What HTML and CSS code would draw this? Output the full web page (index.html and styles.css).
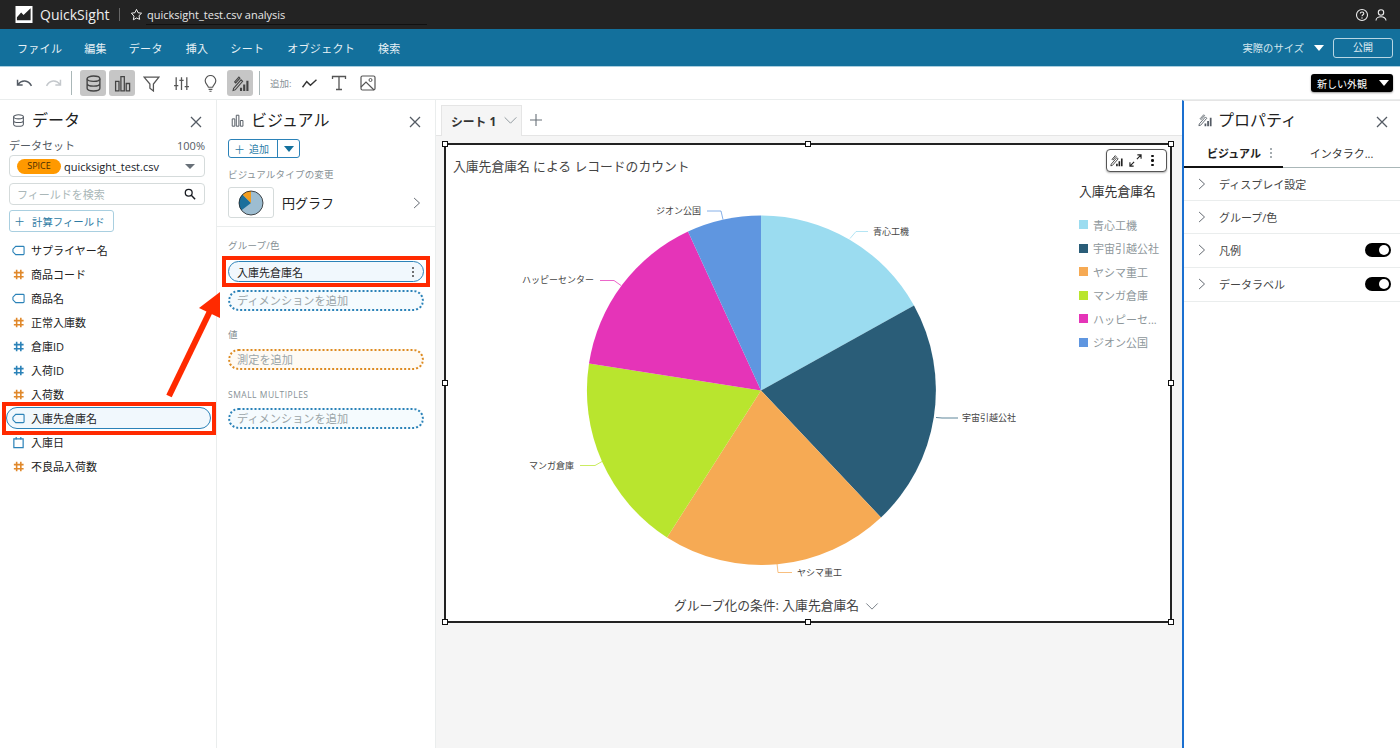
FILE: index.html
```html
<!DOCTYPE html>
<html lang="ja">
<head>
<meta charset="utf-8">
<title>QuickSight</title>
<link rel="stylesheet" href="styles.css">
</head>
<body>
<svg class="defs" width="0" height="0">
  <symbol id="i-tag" viewBox="0 0 14 14"><path d="M4 2.500h8a1 1 0 0 1 1 1v7a1 1 0 0 1-1 1H4L1 8.500v-3z" fill="none" stroke="#2b82b8" stroke-width="1.200"/></symbol>
  <symbol id="i-hash-o" viewBox="0 0 14 14"><path d="M5 2v10M9.500 2v10M2 5h10.500M2 9.500h10.500" fill="none" stroke="#e0882a" stroke-width="1.700"/></symbol>
  <symbol id="i-hash-b" viewBox="0 0 14 14"><path d="M5 2v10M9.500 2v10M2 5h10.500M2 9.500h10.500" fill="none" stroke="#2b82b8" stroke-width="1.700"/></symbol>
  <symbol id="i-cal" viewBox="0 0 14 14"><path d="M2 3h10v9.500H2zM4.500 1v3M9.500 1v3" fill="none" stroke="#2b82b8" stroke-width="1.300"/></symbol>
  <symbol id="i-close" viewBox="0 0 14 14"><path d="M2 2l10 10M12 2L2 12" fill="none" stroke="#545b64" stroke-width="1.300"/></symbol>
  <symbol id="i-db" viewBox="0 0 16 16"><ellipse cx="8" cy="3.500" rx="6" ry="2.500" fill="none" stroke="currentColor" stroke-width="1.300"/><path d="M2 3.500v9c0 1.400 2.700 2.500 6 2.500s6-1.100 6-2.500v-9M2 8c0 1.400 2.700 2.500 6 2.500s6-1.100 6-2.500" fill="none" stroke="currentColor" stroke-width="1.300"/></symbol>
  <symbol id="i-bars" viewBox="0 0 16 16"><path d="M1.500 6h3.200v9H1.500zM6.500 1.500h3.200V15H6.500zM11.500 8h3.200v7h-3.200z" fill="none" stroke="currentColor" stroke-width="1.200"/></symbol>
  <symbol id="i-props" viewBox="0 0 16 16"><path d="M1.500 12.500l7-8 1.500 1.500-7 8-2 .5zM2.500 6.500l4-4.500 1 1-4 4.500z" fill="none" stroke="currentColor" stroke-width="1"/><path d="M7.500 12h2v3h-2zM10.500 9h2v6h-2zM13.500 5.500h2V15h-2z" fill="currentColor"/></symbol>
  <symbol id="i-chev" viewBox="0 0 12 16"><path d="M2.500 2l6.500 6-6.500 6" fill="none" stroke="#545b64" stroke-width="1.100"/></symbol>
</svg>

<header class="topbar">
  <svg class="logo" viewBox="0 0 18 18"><rect width="18" height="18" fill="#fff"/><path d="M1.500 15V12L6 7l2.500 2.500L16 2.500V15z" fill="#232323"/></svg>
  <span class="brand">QuickSight</span>
  <span class="top-div"></span>
  <svg class="star" viewBox="0 0 14 14"><path d="M7 1.500l1.700 3.600 3.800.5-2.800 2.700.7 3.900L7 10.800l-3.400 1.900.7-3.900L1.500 5.600l3.800-.5z" fill="none" stroke="#fff" stroke-width="1"/></svg>
  <span class="file-name">quicksight_test.csv analysis</span>
  <span class="top-right">
    <svg class="top-icon" viewBox="0 0 14 14"><circle cx="7" cy="7" r="5.500" fill="none" stroke="#eee" stroke-width="1.100"/><path d="M5.300 5.600C5.300 3.500 8.800 3.600 8.800 5.500c0 1.300-1.800 1.300-1.800 2.700" fill="none" stroke="#eee" stroke-width="1.100"/><circle cx="7" cy="10" r=".7" fill="#eee"/></svg>
    <svg class="top-icon" viewBox="0 0 14 14"><circle cx="7" cy="4.500" r="2.700" fill="none" stroke="#eee" stroke-width="1.100"/><path d="M2 12.500c0-5 10-5 10 0" fill="none" stroke="#eee" stroke-width="1.100"/></svg>
  </span>
</header>

<nav class="menubar">
  <span class="menu-item m1">ファイル</span>
  <span class="menu-item m2">編集</span>
  <span class="menu-item m3">データ</span>
  <span class="menu-item m4">挿入</span>
  <span class="menu-item m5">シート</span>
  <span class="menu-item m6">オブジェクト</span>
  <span class="menu-item">検索</span>
  <span class="menu-right">
    <span class="size-label">実際のサイズ</span>
    <span class="caret white"></span>
    <span class="publish">公開</span>
  </span>
</nav>

<div class="toolbar">
  <svg class="tb-svg undo" viewBox="0 0 18 14"><path d="M1.500 3v5.500H7M2 8C6 2.500 13 3 16.500 9.500" fill="none" stroke="#545b64" stroke-width="1.600"/></svg>
  <svg class="tb-svg redo" viewBox="0 0 18 14"><path d="M16.500 3v5.500H11M16 8C12 2.500 5 3 1.500 9.500" fill="none" stroke="#c4c8cc" stroke-width="1.600"/></svg>
  <span class="tb-div d1"></span>
  <span class="tb-btn on b1"><svg class="ico17"><use href="#i-db"/></svg></span>
  <span class="tb-btn on b2"><svg class="ico17"><use href="#i-bars"/></svg></span>
  <span class="tb-btn b3"><svg class="ico17" viewBox="0 0 16 16"><path d="M1 2h14L9.800 8.500V15L6.500 12.500v-4z" fill="none" stroke="#555" stroke-width="1.200"/></svg></span>
  <span class="tb-btn b4"><svg class="ico17" viewBox="0 0 16 16"><path d="M3 2v12M8 2v12M13 2v12M1 10h4M6 5h4M11 11h4" fill="none" stroke="#555" stroke-width="1.200"/></svg></span>
  <span class="tb-btn b5"><svg class="ico17" viewBox="0 0 16 16"><path d="M6 11.500C5.500 9.500 3 8.500 3 5.500a5 5 0 0 1 10 0c0 3-2.500 4-3 6zM6.200 13.500h3.600M7 15.300h2" fill="none" stroke="#555" stroke-width="1.100"/></svg></span>
  <span class="tb-btn on b6"><svg class="ico17"><use href="#i-props"/></svg></span>
  <span class="tb-div d2"></span>
  <span class="add-label">追加:</span>
  <svg class="tb-svg add1" viewBox="0 0 18 14"><path d="M1.500 11L6 5l4 4 6.500-6" fill="none" stroke="#333" stroke-width="1.500"/></svg>
  <svg class="tb-svg add2" viewBox="0 0 16 16"><path d="M1.500 4V1.500h13V4M8 1.500v13M5 14.500h6" fill="none" stroke="#555" stroke-width="1.300"/></svg>
  <svg class="tb-svg add3" viewBox="0 0 16 16"><rect x="1" y="1" width="14" height="14" rx="1.500" fill="none" stroke="#555" stroke-width="1.200"/><circle cx="10.500" cy="5" r="1.500" fill="none" stroke="#555"/><path d="M1 12l5-5 8 8" fill="none" stroke="#555" stroke-width="1.200"/></svg>
  <span class="new-look">新しい外観<span class="caret white"></span></span>
</div>

<main class="workspace">
  <aside class="data-panel">
    <div class="panel-head">
      <svg class="head-ico"><use href="#i-db"/></svg>
      <h2>データ</h2>
      <svg class="close"><use href="#i-close"/></svg>
    </div>
    <div class="ds-label"><span>データセット</span><span>100%</span></div>
    <div class="ds-select"><span class="spice">SPICE</span><span class="ds-name">quicksight_test.csv</span><span class="caret grey"></span></div>
    <div class="search"><span>フィールドを検索</span>
      <svg class="search-ico" viewBox="0 0 14 14"><circle cx="5.500" cy="5.500" r="4" fill="none" stroke="#16191f" stroke-width="1.500"/><path d="M8.500 8.500l4.500 4.500" stroke="#16191f" stroke-width="1.700"/></svg>
    </div>
    <div class="calc-btn"><span class="plus">＋</span>計算フィールド</div>
    <ul class="fields">
      <li><svg class="f-ico"><use href="#i-tag"/></svg>サプライヤー名</li>
      <li><svg class="f-ico"><use href="#i-hash-o"/></svg>商品コード</li>
      <li><svg class="f-ico"><use href="#i-tag"/></svg>商品名</li>
      <li><svg class="f-ico"><use href="#i-hash-o"/></svg>正常入庫数</li>
      <li><svg class="f-ico"><use href="#i-hash-b"/></svg>倉庫ID</li>
      <li><svg class="f-ico"><use href="#i-hash-b"/></svg>入荷ID</li>
      <li><svg class="f-ico"><use href="#i-hash-o"/></svg>入荷数</li>
      <li class="selected"><svg class="f-ico"><use href="#i-tag"/></svg>入庫先倉庫名</li>
      <li><svg class="f-ico"><use href="#i-cal"/></svg>入庫日</li>
      <li><svg class="f-ico"><use href="#i-hash-o"/></svg>不良品入荷数</li>
    </ul>
  </aside>

  <aside class="visual-panel">
    <div class="panel-head">
      <svg class="head-ico"><use href="#i-bars"/></svg>
      <h2>ビジュアル</h2>
      <svg class="close"><use href="#i-close"/></svg>
    </div>
    <div class="add-split"><span class="add-main"><span class="plus">＋</span>追加</span><span class="add-drop"><span class="caret blue"></span></span></div>
    <div class="v-type">
      <div class="mini-label">ビジュアルタイプの変更</div>
      <div class="type-row">
        <span class="type-tile">
          <svg class="type-pie" viewBox="0 0 26 26"><circle cx="13" cy="13" r="12" fill="#9dbdd1"/><path d="M13 13L3.500 20.300A12 12 0 0 1 4.500 4.500z" fill="#1a6f9c"/><path d="M13 13L4.500 4.500A12 12 0 0 1 13 1z" fill="#f29d1f"/><circle cx="13" cy="13" r="12" fill="none" stroke="#222" stroke-width=".8"/></svg>
        </span>
        <span class="type-name">円グラフ</span>
        <svg class="type-chev"><use href="#i-chev"/></svg>
      </div>
    </div>
    <div class="wells">
      <div class="mini-label">グループ/色</div>
      <div class="field-pill"><span>入庫先倉庫名</span><span class="dots"><i></i><i></i><i></i></span></div>
      <div class="well blue w-tight">ディメンションを追加</div>
      <div class="mini-label l-val">値</div>
      <div class="well orange">測定を追加</div>
      <div class="mini-label l-small">SMALL MULTIPLES</div>
      <div class="well blue">ディメンションを追加</div>
    </div>
  </aside>

  <section class="canvas">
    <div class="tabs">
      <div class="tab"><b>シート 1</b><svg class="tab-chev" viewBox="0 0 16 10"><path d="M1.500 1.500L8 8l6.500-6.500" fill="none" stroke="#879196" stroke-width="1"/></svg></div>
      <svg class="tab-plus" viewBox="0 0 12 12"><path d="M6 0v12M0 6h12" stroke="#687078" stroke-width="1.100"/></svg>
    </div>
    <div class="sheet">
      <article class="visual">
        <i class="h h-tl"></i><i class="h h-tc"></i><i class="h h-tr"></i><i class="h h-ml"></i><i class="h h-mr"></i><i class="h h-bl"></i><i class="h h-bc"></i><i class="h h-br"></i>
        <div class="vis-tools">
          <svg class="vt-ico"><use href="#i-props"/></svg>
          <svg class="vt-ico2" viewBox="0 0 14 14"><path d="M8.500 5.500L13 1M9 1h4v4M5.500 8.500L1 13M1 9v4h4" fill="none" stroke="#222" stroke-width="1.200"/></svg>
          <span class="dots dark"><i></i><i></i><i></i></span>
        </div>
        <h3 class="vis-title">入庫先倉庫名 による レコードのカウント</h3>
        <div class="plot">
          <svg class="pie" viewBox="446 178.500 620 415">
            <path d="M761 390L761 215A175 175 0 0 1 914 305z" fill="#9bdcf0"/>
            <path d="M761 390L914 305A175 175 0 0 1 881 517z" fill="#2a5d78"/>
            <path d="M761 390L881 517A175 175 0 0 1 667 537z" fill="#f6aa54"/>
            <path d="M761 390L667 537A175 175 0 0 1 589 363z" fill="#b9e52e"/>
            <path d="M761 390L589 363A175 175 0 0 1 688 231z" fill="#e534b8"/>
            <path d="M761 390L688 231A175 175 0 0 1 761 215z" fill="#5f96e0"/>
            <path class="lead" d="M850 238l6-7h12" stroke="#9bdcf0"/>
            <path class="lead" d="M936 417l6 .5h16" stroke="#2a5d78"/>
            <path class="lead" d="M777 563l1 9h14" stroke="#f6aa54"/>
            <path class="lead" d="M602 461l-7 4h-15" stroke="#b9e52e"/>
            <path class="lead" d="M621 285l-7-5h-14" stroke="#e534b8"/>
            <path class="lead" d="M723 219l-2-8.500h-14" stroke="#5f96e0"/>
            <text class="lbl" x="873" y="234">青心工機</text>
            <text class="lbl" x="962" y="420">宇宙引越公社</text>
            <text class="lbl" x="797" y="575">ヤシマ重工</text>
            <text class="lbl" x="529" y="468">マンガ倉庫</text>
            <text class="lbl" x="522" y="282">ハッピーセンター</text>
            <text class="lbl" x="656" y="213">ジオン公国</text>
          </svg>
          <div class="legend">
            <div class="legend-title">入庫先倉庫名</div>
            <ul>
              <li><i class="sw c1"></i>青心工機</li>
              <li><i class="sw c2"></i>宇宙引越公社</li>
              <li><i class="sw c3"></i>ヤシマ重工</li>
              <li><i class="sw c4"></i>マンガ倉庫</li>
              <li><i class="sw c5"></i>ハッピーセ...</li>
              <li><i class="sw c6"></i>ジオン公国</li>
            </ul>
          </div>
        </div>
        <div class="vis-foot"><span>グループ化の条件: 入庫先倉庫名</span><svg class="foot-chev" viewBox="0 0 16 10"><path d="M1.500 1.500L8 8l6.500-6.500" fill="none" stroke="#687078" stroke-width="1"/></svg></div>
      </article>
    </div>
  </section>

  <aside class="prop-panel">
    <div class="panel-head">
      <svg class="head-ico"><use href="#i-props"/></svg>
      <h2>プロパティ</h2>
      <svg class="close"><use href="#i-close"/></svg>
    </div>
    <div class="prop-tabs">
      <div class="ptab active"><span>ビジュアル</span><span class="dots grey"><i></i><i></i><i></i></span></div>
      <div class="ptab">インタラク...</div>
    </div>
    <div class="prop-row"><svg class="p-chev"><use href="#i-chev"/></svg>ディスプレイ設定</div>
    <div class="prop-row"><svg class="p-chev"><use href="#i-chev"/></svg>グループ/色</div>
    <div class="prop-row tall"><svg class="p-chev"><use href="#i-chev"/></svg>凡例<span class="toggle"></span></div>
    <div class="prop-row tall"><svg class="p-chev"><use href="#i-chev"/></svg>データラベル<span class="toggle"></span></div>
  </aside>
</main>

<i class="mark mark-list"></i>
<i class="mark mark-well"></i>
<svg class="arrow" viewBox="160 285 70 120"><path d="M169 396L212 307" stroke="#ff2a00" stroke-width="6" fill="none"/><path d="M220 292L199 308L220 318z" fill="#ff2a00"/></svg>
</body>
</html>
```

FILE: styles.css
```css
* { box-sizing: border-box; }
html, body { margin: 0; padding: 0; }
body {
  width: 1400px;
  height: 748px;
  overflow: hidden;
  position: relative;
  background: #fff;
  color: #16191f;
  font-family: "Open Sans", "Noto Sans CJK JP", sans-serif;
  font-size: 11px;
  display: flex;
  flex-direction: column;
}
.defs { position: absolute; }
h2, h3, ul { margin: 0; padding: 0; font-weight: 400; list-style: none; }
i { font-style: normal; }

/* top bar */
.topbar {
  height: 29px;
  flex: none;
  background: #232323;
  color: #fff;
  display: flex;
  align-items: center;
  padding: 0 11px 0 15px;
}
.logo { width: 18px; height: 17px; }
.brand { margin-left: 7px; font-size: 14px; width: 69px; color: #eee; }
.top-div { width: 1px; height: 13px; background: #666; margin-left: 10px; }
.star { width: 13px; height: 13px; margin-left: 10px; }
.file-name {
  margin-left: 3px;
  width: 281px;
  font-size: 11px;
  color: #e8e8e8;
  line-height: 18px;
  border-bottom: 1px solid #111;
  align-self: flex-end;
  margin-bottom: 4px;
  padding-left: 1px;
}
.top-right { margin-left: auto; display: flex; gap: 5px; padding-right: 1px; }
.top-icon { width: 14px; height: 14px; }

/* menu */
.menubar {
  height: 38px;
  flex: none;
  background: #13709c;
  border-bottom: 1px solid #a9cfe0;
  color: #e6f1f6;
  display: flex;
  align-items: center;
  padding: 0 7px 0 17px;
  font-size: 11px;
}
.menu-item { margin-right: 23px; letter-spacing: .3px; }
.m1 { margin-right: 22px; }
.m2 { margin-right: 22px; }
.m3 { margin-right: 23px; }
.m4 { margin-right: 22px; }
.menu-right { margin-left: auto; display: flex; align-items: center; }
.size-label { font-size: 10.300px; color: #d4e6ee; margin-right: 1px; }
.publish {
  margin-left: 9px;
  width: 60px;
  height: 20px;
  border: 1px solid #b9d7e4;
  border-radius: 3px;
  text-align: center;
  line-height: 17px;
  font-size: 10px;
  color: #e2eff5;
}
.caret { display: inline-block; width: 0; height: 0; border-left: 5px solid transparent; border-right: 5px solid transparent; }
.caret.white { border-top: 6px solid #fff; }
.caret.grey { border-top: 5px solid #687078; }
.caret.blue { border-top: 6px solid #13709c; }
.menu-right .caret { margin-left: 9px; }

/* toolbar */
.toolbar {
  height: 33px;
  flex: none;
  display: flex;
  align-items: center;
  padding: 0 7px 0 16px;
  border-bottom: 1px solid #eaeded;
}
.tb-svg { flex: none; }
.undo { width: 17px; height: 13px; }
.redo { width: 17px; height: 13px; margin-left: 12px; }
.tb-div { width: 1px; height: 24px; background: #aab7b8; flex: none; }
.d1 { margin-left: 9px; margin-right: 8px; }
.tb-btn {
  width: 26px;
  height: 26px;
  border-radius: 3px;
  display: flex;
  align-items: center;
  justify-content: center;
  flex: none;
  color: #444;
}
.tb-btn.on { background: #c6c6c6; }
.b2, .b3 { margin-left: 3px; }
.b4 { margin-left: 4px; }
.b5 { margin-left: 3px; }
.b6 { margin-left: 4px; }
.ico17 { width: 17px; height: 17px; }
.d2 { margin-left: 6px; }
.add-label { margin-left: 10px; font-size: 9.500px; color: #879196; width: 22px; white-space: nowrap; }
.add1 { width: 17px; height: 13px; margin-left: 9px; }
.add2 { width: 16px; height: 16px; margin-left: 13px; }
.add3 { width: 16px; height: 16px; margin-left: 13px; }
.new-look {
  margin-left: auto;
  width: 82px;
  height: 18px;
  background: #000;
  color: #fff;
  border-radius: 3px;
  font-size: 10px;
  display: flex;
  align-items: center;
  justify-content: space-between;
  padding: 0 4px 0 6px;
  box-shadow: 0 1px 2px rgba(0,0,0,.4);
}

/* workspace */
.workspace { flex: 1; display: flex; min-height: 0; }
.panel-head { height: 39px; display: flex; align-items: center; position: relative; padding-top: 1px; }
.panel-head h2 { font-size: 16px; color: #222; line-height: 20px; }
.head-ico { width: 13px; height: 13px; color: #545b64; margin-right: 7px; }
.close { width: 14px; height: 14px; margin-left: auto; margin-top: 4px; }

.data-panel {
  width: 217px;
  flex: none;
  border-right: 1px solid #eaeded;
  padding: 0 11px 0 9px;
  position: relative;
}
.data-panel .panel-head { padding-left: 3px; }
.data-panel .close { margin-right: 2px; }
.ds-label { display: flex; justify-content: space-between; font-size: 11px; color: #545b64; line-height: 14px; height: 16px; }
.ds-label span:last-child { font-size: 11px; }
.ds-select {
  width: 196px;
  height: 22px;
  border: 1px solid #d5dbdb;
  border-radius: 4px;
  display: flex;
  align-items: center;
  padding: 0 9px 0 7px;
}
.spice {
  background: #f90;
  color: #4a2d00;
  border-radius: 8px;
  height: 15px;
  width: 44px;
  text-align: center;
  font-size: 9px;
  line-height: 14px;
}
.ds-name { margin-left: 3px; font-size: 11px; color: #16191f; }
.ds-select .caret { margin-left: auto; }
.search {
  width: 196px;
  height: 22px;
  margin-top: 6px;
  border: 1px solid #d5dbdb;
  border-radius: 4px;
  display: flex;
  align-items: center;
  justify-content: space-between;
  padding: 0 8px 0 7px;
  color: #aab7b8;
  font-size: 11px;
}
.search-ico { width: 12px; height: 12px; }
.calc-btn {
  width: 105px;
  height: 22px;
  margin-top: 5px;
  border: 1px solid #a9cfe0;
  border-radius: 3px;
  color: #2e7ba3;
  font-size: 10.400px;
  display: flex;
  align-items: center;
  padding-left: 4px;
}
.calc-btn .plus { margin-right: 7px; }
.plus { font-size: 11px; margin-right: 4px; }
.fields { margin: 6px -11px 0 -9px; }
.fields li {
  height: 24px;
  display: flex;
  align-items: center;
  padding-left: 12px;
  font-size: 11px;
  color: #222;
}
.f-ico { width: 13px; height: 13px; margin-right: 6px; flex: none; }
.fields li.selected { position: relative; }
.fields li.selected::before {
  content: "";
  position: absolute;
  left: 6px;
  right: 5px;
  top: 1px;
  bottom: 1px;
  background: #f1f8fd;
  border: 1px solid #2b82b8;
  border-radius: 11px;
  z-index: -1;
}

.visual-panel {
  width: 219px;
  flex: none;
  border-right: 1px solid #eaeded;
  position: relative;
}
.visual-panel .panel-head { padding: 1px 13px 0 14px; }
.add-split {
  margin: 0 0 0 11px;
  width: 72px;
  height: 19px;
  border: 1px solid #2b82b8;
  border-radius: 3px;
  display: flex;
  color: #2b7ca8;
  font-size: 10px;
}
.add-main { flex: 1; display: flex; align-items: center; padding-left: 5px; border-right: 1px solid #2b82b8; }
.add-drop { width: 21px; display: flex; align-items: center; justify-content: center; }
.v-type { padding: 10px 11px 8px; border-bottom: 1px solid #eaeded; }
.mini-label { font-size: 9.500px; color: #879196; line-height: 14px; letter-spacing: .2px; }
.type-row { display: flex; align-items: center; margin-top: 5px; }
.type-tile {
  width: 46px;
  height: 31px;
  border: 1px solid #d5dbdb;
  border-radius: 3px;
  display: flex;
  align-items: center;
  justify-content: center;
}
.type-pie { width: 26px; height: 26px; }
.type-name { margin-left: 8px; font-size: 13px; color: #222; }
.type-chev { width: 10px; height: 16px; margin-left: auto; margin-right: 2px; }
.wells { padding: 12px 11px 0; }
.field-pill {
  margin-top: 8px;
  height: 21px;
  width: 196px;
  background: #f1f8fd;
  border: 1px solid #2b82b8;
  border-radius: 11px;
  display: flex;
  align-items: center;
  justify-content: space-between;
  padding: 0 9px 0 8px;
  font-size: 11px;
  color: #222;
}
.dots { display: inline-flex; flex-direction: column; gap: 2px; }
.dots i { width: 2px; height: 2px; background: #444; border-radius: 50%; display: block; }
.dots.dark i { background: #111; width: 2.500px; height: 2.500px; }
.dots.grey i { background: #879196; }
.well {
  height: 21px;
  width: 196px;
  border-radius: 11px;
  padding-left: 7px;
  font-size: 11.200px;
  line-height: 18px;
  color: #9ba5a8;
  margin-top: 8px;
}
.w-tight { margin-top: 8px; }
.well.blue { border: 2px dotted #2b82b8; background: #f5fbfe; }
.well.orange { border: 2px dotted #dd8a20; background: #fefaf4; }
.l-val { margin-top: 17px; }
.l-small { margin-top: 18px; font-size: 8.500px; letter-spacing: .5px; }
.l-val + .well { margin-top: 7px; }
.l-small + .well { margin-top: 6px; }

/* canvas */
.canvas { flex: 1; min-width: 0; display: flex; flex-direction: column; background: #f5f5f5; }
.tabs {
  height: 36px;
  flex: none;
  background: #fff;
  border-bottom: 1px solid #e5e5e5;
  display: flex;
  align-items: flex-end;
  padding-left: 5px;
}
.tab {
  width: 81px;
  height: 31px;
  background: #f5f5f5;
  border: 1px solid #e5e5e5;
  border-bottom: 0;
  display: flex;
  align-items: center;
  padding: 0 0 2px 9px;
  font-size: 11.800px;
  color: #333;
  margin-bottom: -1px;
}
.tab b { font-weight: 700; white-space: nowrap; }
.tab-chev { width: 15px; height: 9px; margin-left: 7px; }
.tab-plus { width: 12px; height: 12px; margin: 0 0 9px 8px; }
.sheet { flex: 1; padding: 7px 0 0 8px; min-height: 0; }
.visual {
  position: relative;
  width: 728px;
  height: 480px;
  background: #fff;
  border: 2px solid #222;
  display: flex;
  flex-direction: column;
}
.vis-title { font-size: 12.800px; color: #444; padding: 12px 0 0 7px; line-height: 18px; height: 34px; }
.plot { flex: 1; min-height: 0; display: flex; position: relative; }
.pie { width: 620px; height: 415px; flex: none; }
.lead { fill: none; stroke-width: 1; opacity: .75; }
.lbl { font-size: 9px; fill: #444; font-family: "Noto Sans CJK JP", sans-serif; }
.legend { margin-left: 13px; width: 90px; }
.legend-title { font-size: 12.800px; color: #333; white-space: nowrap; margin-top: 3px; line-height: 18px; }
.legend ul { margin-top: 13px; }
.legend li { height: 23.500px; display: flex; align-items: center; font-size: 11px; color: #8d969a; white-space: nowrap; }
.sw { width: 9px; height: 9px; margin-right: 5px; flex: none; }
.c1 { background: #9bdcf0; }
.c2 { background: #2a5d78; }
.c3 { background: #f6aa54; }
.c4 { background: #b9e52e; }
.c5 { background: #e534b8; }
.c6 { background: #5f96e0; }
.vis-foot {
  height: 27px;
  flex: none;
  display: flex;
  align-items: center;
  padding: 0 0 6px 228px;
  font-size: 12.800px;
  color: #444;
}
.foot-chev { width: 14px; height: 9px; margin-left: 6px; margin-top: 3px; }
.vis-tools {
  position: absolute;
  top: 4px;
  right: 3px;
  width: 61px;
  height: 23px;
  background: #fff;
  border: 1px solid #555;
  border-radius: 4px;
  box-shadow: 0 1px 2px rgba(0,0,0,.3);
  display: flex;
  align-items: center;
  padding-left: 3px;
  z-index: 2;
}
.vt-ico { width: 13px; height: 13px; color: #222; }
.vt-ico2 { width: 13px; height: 13px; margin-left: 6px; }
.vis-tools .dots { margin-left: 9px; }
.h { position: absolute; width: 6px; height: 6px; background: #fff; border: 1px solid #111; z-index: 3; }
.h-tl { left: -4px; top: -4px; }
.h-tc { left: 359px; top: -4px; }
.h-tr { right: -4px; top: -4px; }
.h-ml { left: -4px; top: 235px; }
.h-mr { right: -4px; top: 235px; }
.h-bl { left: -4px; bottom: -4px; }
.h-bc { left: 359px; bottom: -4px; }
.h-br { right: -4px; bottom: -4px; }

/* properties */
.prop-panel { width: 218px; flex: none; border-left: 2px solid #1a6fd0; border-top: 1px solid #e5e5e5; background: #fff; }
.prop-panel .panel-head { height: 38px; padding: 0 11px 0 14px; }
.prop-panel .head-ico { width: 14px; height: 14px; margin-right: 6px; }
.prop-tabs { display: flex; height: 29px; border-bottom: 1px solid #aab7b8; font-size: 11px; }
.ptab { flex: 1; display: flex; align-items: center; justify-content: center; color: #333; }
.ptab.active { flex: none; width: 99px; border-bottom: 2px solid #111; margin-bottom: -1px; font-weight: 700; gap: 9px; justify-content: flex-start; padding-left: 23px; color: #222; }
.prop-row {
  height: 33px;
  display: flex;
  align-items: center;
  border-bottom: 1px solid #eaeded;
  padding: 0 9px 1px 13px;
  font-size: 11px;
  color: #444;
}
.prop-row.tall { height: 34px; }
.p-chev { width: 10px; height: 14px; margin-right: 12px; }
.toggle { margin-left: auto; width: 26px; height: 14px; background: #000; border-radius: 7px; position: relative; }
.toggle::after { content: ""; position: absolute; right: 2px; top: 2px; width: 10px; height: 10px; background: #fff; border-radius: 50%; }

/* annotations */
.mark { position: absolute; border: 4px solid #ff2a00; z-index: 5; pointer-events: none; }
.mark-list { left: 2px; top: 402px; width: 214px; height: 33px; }
.mark-well { left: 222px; top: 256px; width: 208px; height: 31px; }
.arrow { position: absolute; left: 160px; top: 285px; width: 70px; height: 120px; z-index: 5; }
```
